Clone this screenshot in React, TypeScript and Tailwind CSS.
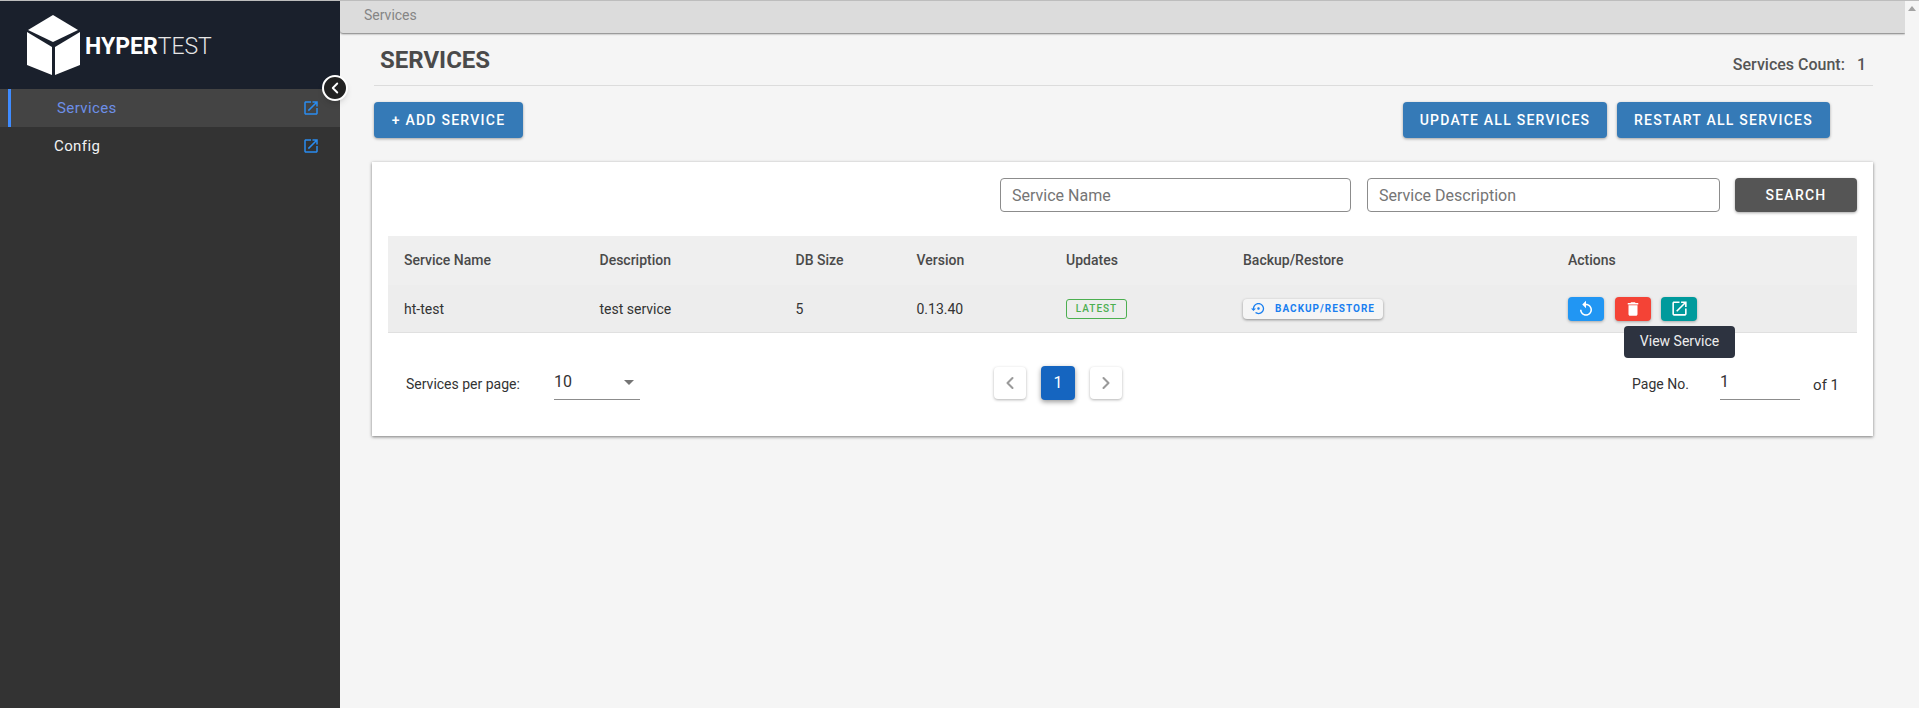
import React from 'react';
import { ChevronLeft, ChevronRight } from 'lucide-react';

const OpenIcon: React.FC<{ className?: string }> = ({ className }) => (
  <svg viewBox="0 0 24 24" className={className} fill="currentColor">
    <path d="M19 19H5V5h7V3H5c-1.11 0-2 .9-2 2v14c0 1.1.89 2 2 2h14c1.1 0 2-.9 2-2v-7h-2v7zM14 3v2h3.59l-9.83 9.83 1.41 1.41L19 6.41V10h2V3h-7z" />
  </svg>
);

const Cube: React.FC = () => (
  <svg viewBox="0 0 53 60" className="h-[60px] w-[53px]" fill="#fff">
    <path d="M26 0 L51 15 L26 27 L1 15 Z" />
    <path d="M0 17 L25 32 L25 60 L0 50 Z" />
    <path d="M28 32 L53 17 L53 50 L28 60 Z" />
  </svg>
);

const NavItem: React.FC<{ label: string; active?: boolean }> = ({ label, active }) => (
  <div className={`relative flex h-[38px] items-center justify-between pr-[20px] ${active ? 'bg-[#444444] pl-[57px] text-[#6d8fe8]' : 'pl-[54px] text-[#f2f2f2]'}`}>
    {active && <div className="absolute left-[8px] top-0 h-full w-[3px] bg-[#3f8cff]" />}
    <span className="text-[15px] tracking-[0.4px]">{label}</span>
    <OpenIcon className="h-[18px] w-[18px] text-[#2a8cf0]" />
  </div>
);

const Sidebar: React.FC = () => (
  <aside className="relative z-10 w-[340px] shrink-0 bg-[#333333]">
    <div className="flex h-[88px] items-start bg-[#1a202c] pl-[27px] pt-[14px]">
      <Cube />
      <span className="ml-[5px] mt-[18px] text-[23px] leading-[28px] text-white">
        <span className="font-bold">HYPER</span>
        <span className="font-light text-[#e6e6e6]">TEST</span>
      </span>
    </div>
    <NavItem label="Services" active />
    <NavItem label="Config" />
    <button className="absolute right-[-8px] top-[74px] flex h-[26px] w-[26px] items-center justify-center rounded-full border-2 border-white bg-[#222222] text-white shadow-md">
      <ChevronLeft className="h-[18px] w-[18px]" strokeWidth={2.5} />
    </button>
  </aside>
);

const BlueButton: React.FC<{ label: string; className: string }> = ({ label, className }) => (
  <button className={`flex h-[36px] items-center justify-center rounded-[4px] bg-[#357ab7] text-[14px] font-medium tracking-[1.25px] text-white shadow-[0_1px_3px_rgba(0,0,0,0.35)] ${className}`}>
    {label}
  </button>
);

const GRID = 'grid grid-cols-[195.5px_196px_121px_149.5px_177px_325px_1fr]';

const ServicesTable: React.FC = () => (
  <div>
    <div className={`${GRID} h-[49px] items-center bg-[#efefef] text-[14px] font-medium text-[#4a4a4a]`}>
      {['Service Name', 'Description', 'DB Size', 'Version', 'Updates', 'Backup/Restore', 'Actions'].map((h) => (
        <div key={h} className="pl-4">{h}</div>
      ))}
    </div>
    <div className={`${GRID} h-[48px] items-center border-b border-[#e0e0e0] bg-[#ededed] text-[14px] text-[#333333]`}>
      <div className="pl-4 pt-[1px]">ht-test</div>
      <div className="pl-4 pt-[1px]">test service</div>
      <div className="pl-4 pt-[1px]">5</div>
      <div className="pl-4 pt-[1px]">0.13.40</div>
      <div className="pl-4">
        <span className="flex h-[20px] w-[61px] items-center justify-center rounded-[3px] border border-[#4caf50] text-[10px] font-medium tracking-[1px] text-[#4caf50]">LATEST</span>
      </div>
      <div className="pl-4">
        <button className="flex h-[20px] w-[140px] items-center justify-center gap-[9px] rounded-[4px] bg-[#f5f5f5] text-[10px] font-bold tracking-[1px] text-[#1a7ff0] shadow-[0_1px_3px_rgba(0,0,0,0.4)]">
          <svg viewBox="0 0 24 24" className="h-[15px] w-[15px]" fill="currentColor">
            <path d="M14 12c0-1.1-.9-2-2-2s-2 .9-2 2 .9 2 2 2 2-.9 2-2zm-2-9c-4.97 0-9 4.03-9 9H0l4 4 4-4H5c0-3.87 3.13-7 7-7s7 3.13 7 7-3.13 7-7 7c-1.51 0-2.91-.49-4.06-1.3l-1.42 1.44C8.04 20.3 9.94 21 12 21c4.97 0 9-4.03 9-9s-4.03-9-9-9z" />
          </svg>
          BACKUP/RESTORE
        </button>
      </div>
      <div className="relative flex gap-[10px] pl-4">
        <button className="flex h-[24px] w-[36px] items-center justify-center rounded-[4px] bg-[#2196f3] text-white shadow-[0_1px_3px_rgba(0,0,0,0.3)]">
          <svg viewBox="0 0 24 24" className="h-[18px] w-[18px]" fill="currentColor">
            <path d="M12 5V1L7 6l5 5V7c3.31 0 6 2.69 6 6s-2.69 6-6 6-6-2.69-6-6H4c0 4.42 3.58 8 8 8s8-3.58 8-8-3.58-8-8-8z" />
          </svg>
        </button>
        <button className="ml-[1px] flex h-[24px] w-[36px] items-center justify-center rounded-[4px] bg-[#f44336] text-white shadow-[0_1px_3px_rgba(0,0,0,0.3)]">
          <svg viewBox="0 0 24 24" className="h-[18px] w-[18px]" fill="currentColor">
            <path d="M6 19c0 1.1.9 2 2 2h8c1.1 0 2-.9 2-2V7H6v12zM19 4h-3.5l-1-1h-5l-1 1H5v2h14V4z" />
          </svg>
        </button>
        <button className="flex h-[24px] w-[36px] items-center justify-center rounded-[4px] bg-[#009a9c] text-white shadow-[0_1px_3px_rgba(0,0,0,0.3)]">
          <OpenIcon className="h-[19px] w-[19px]" />
        </button>
        <div className="absolute left-[72px] top-[29px] flex h-[32px] w-[111px] items-center justify-center rounded-[4px] bg-[#2d3340] text-[14px] text-[#eeeeee]">
          View Service
        </div>
      </div>
    </div>
  </div>
);

const PageButton: React.FC<{ children: React.ReactNode; active?: boolean }> = ({ children, active }) => (
  <button className={`flex items-center justify-center rounded-[4px] ${active ? 'h-[34px] w-[34px] bg-[#1565c0] text-[16px] text-white shadow-[0_2px_5px_rgba(0,0,0,0.4)]' : 'h-[32px] w-[32px] bg-white text-[#9a9a9a] shadow-[0_1px_3px_rgba(0,0,0,0.3)]'}`}>
    {children}
  </button>
);

const Pagination: React.FC = () => (
  <div className="grid h-[103px] grid-cols-[606px_128px_1fr] items-start pt-[33px] text-[14px] text-[#333333]">
    <div className="flex items-center pl-[18px] pt-[3px]">
      <span className="w-[148px]">Services per page:</span>
      <div className="flex h-[31px] w-[86px] items-center justify-between border-b border-[#8c8c8c] pb-[4px] text-[16px] text-[#333333]">
        10
        <span className="mr-[6px] h-0 w-0 border-x-[5px] border-t-[5px] border-x-transparent border-t-[#757575]" />
      </div>
    </div>
    <div className="flex items-center gap-[15px]">
      <PageButton><ChevronLeft className="h-[20px] w-[20px]" strokeWidth={2.5} /></PageButton>
      <PageButton active>1</PageButton>
      <PageButton><ChevronRight className="h-[20px] w-[20px]" strokeWidth={2.5} /></PageButton>
    </div>
    <div className="flex items-center justify-end pr-[18px] pt-[3px]">
      <span className="w-[88px]">Page No.</span>
      <div className="flex h-[31px] w-[80px] items-center border-b border-[#8c8c8c] pb-[4px] text-[16px]">1</div>
      <span className="ml-[13px] pt-[1px] text-[15px]">of 1</span>
    </div>
  </div>
);

export default function App() {
  return (
    <div className="flex h-[708px] overflow-hidden border-t border-[#bdbdbd] bg-[#f5f5f5] font-['Roboto',sans-serif]">
      <Sidebar />
      <main className="min-w-0 flex-1">
        <div className="flex h-[32px] items-center rounded-bl-[3px] bg-[#dcdcdc] pb-[4px] pl-[24px] text-[14px] text-[#858585] shadow-[0_1px_2px_rgba(0,0,0,0.5)]">
          Services
        </div>
        <div className="mx-[32px]">
          <div className="ml-[2px] flex h-[53px] items-end justify-between border-b border-[#dcdcdc]">
            <h1 className="mb-[12px] ml-[6px] text-[24px] font-bold leading-[26px] text-[#4a4a4a]">SERVICES</h1>
            <div className="mb-[8px] mr-[7px] flex text-[16px] font-medium text-[#555555]">
              <span>Services Count:</span>
              <span className="ml-[12px]">1</span>
            </div>
          </div>
          <div className="mt-[16px] flex justify-between pl-[2px] pr-[43px]">
            <BlueButton label="+ ADD SERVICE" className="w-[149px]" />
            <div className="flex gap-[10px]">
              <BlueButton label="UPDATE ALL SERVICES" className="w-[204px]" />
              <BlueButton label="RESTART ALL SERVICES" className="w-[213px]" />
            </div>
          </div>
          <section className="mt-[24px] bg-white px-4 pt-[16px] shadow-[0_1px_3px_rgba(0,0,0,0.5)]">
            <div className="flex h-[58px] items-start justify-end gap-[13px]">
              <input placeholder="Service Name" className="mr-[3px] h-[34px] w-[351px] rounded-[4px] border border-[#8c8c8c] px-[11px] text-[16px] outline-none placeholder:text-[#757575]" />
              <input placeholder="Service Description" className="h-[34px] w-[353px] rounded-[4px] border border-[#8c8c8c] px-[11px] text-[16px] outline-none placeholder:text-[#757575]" />
              <button className="ml-[2px] h-[34px] w-[122px] rounded-[4px] bg-[#555555] text-[14px] font-medium tracking-[1.25px] text-white shadow-[0_1px_3px_rgba(0,0,0,0.35)]">SEARCH</button>
            </div>
            <ServicesTable />
            <Pagination />
          </section>
        </div>
      </main>
      <div className="flex w-[14px] shrink-0 justify-center bg-[#f5f5f5] pt-[5px]">
        <span className="h-0 w-0 border-x-[4px] border-b-[5px] border-x-transparent border-b-[#a3a3a3]" />
      </div>
    </div>
  );
}
